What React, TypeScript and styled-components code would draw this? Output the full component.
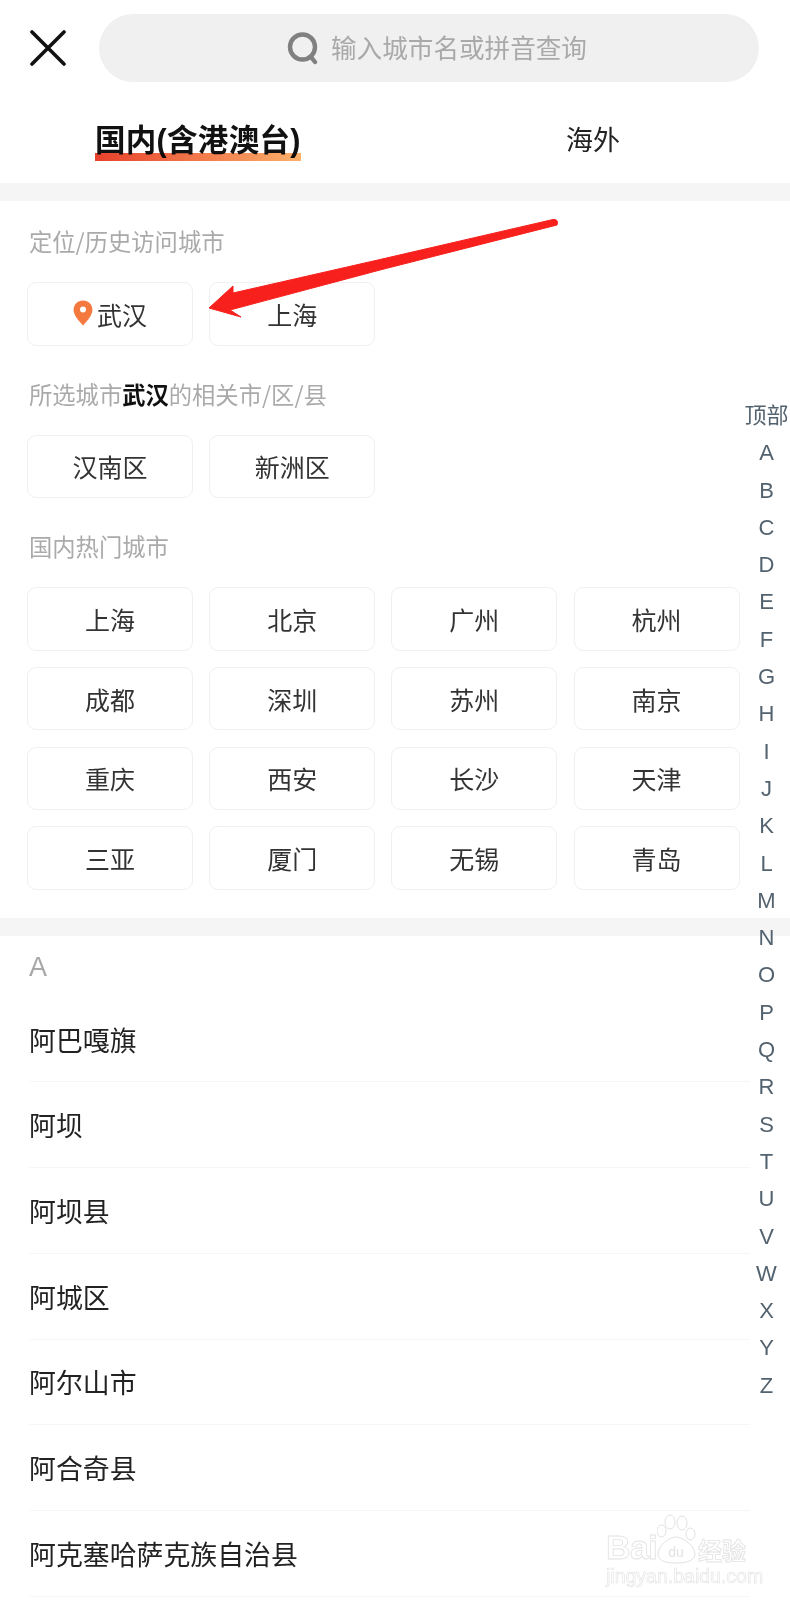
import styled, { createGlobalStyle } from "styled-components";

const GlobalStyle = createGlobalStyle`
  html, body {
    margin: 0;
    padding: 0;
    background: #fff;
  }
  #root {
    height: 1600px;
    overflow: hidden;
  }
  * {
    box-sizing: border-box;
  }
`;

const Page = styled.div`
  position: relative;
  width: 790px;
  height: 1600px;
  overflow: hidden;
  background: #fff;
  font-family: "Noto Sans CJK SC", "Noto Sans", sans-serif;
`;

const SearchRow = styled.div`
  display: flex;
  align-items: center;
  height: 96px;
  padding: 0 31px 0 30px;
  gap: 33px;
`;

const CloseBtn = styled.svg`
  width: 36px;
  height: 36px;
  flex: none;
`;

const SearchBox = styled.div`
  flex: 1;
  height: 68px;
  padding-left: 16px;
  background: #f0f0f0;
  border-radius: 34px;
  display: flex;
  align-items: center;
  justify-content: center;
  gap: 12px;
  font-size: 25.6px;
  color: #a9a9a9;
`;

const SearchHint = styled.span`
  padding-bottom: 4px;
`;

const Tabs = styled.div`
  display: flex;
  height: 87px;
  padding-left: 95px;
`;

const Tab = styled.div`
  position: relative;
  height: 65px;
  display: flex;
  align-items: center;
  margin-top: 12px;
  padding-bottom: 5px;
`;

const ActiveTab = styled(Tab)`
  width: 206px;
  font-family: "Liberation Sans", "Noto Sans CJK SC", sans-serif;
  font-size: 30.5px;
  font-weight: 700;
  color: #111;
  letter-spacing: 0.3px;
  white-space: nowrap;
  &::after {
    content: "";
    position: absolute;
    left: 0;
    right: 0;
    top: 45px;
    height: 8px;
    background: linear-gradient(90deg, #e8412c, #fbb06a);
    mix-blend-mode: multiply;
  }
`;

const PlainTab = styled(Tab)`
  margin-left: 265px;
  font-size: 27px;
  color: #222;
`;

const Band = styled.div`
  height: 18px;
  background: #f5f5f5;
`;

const HotSection = styled.section`
  padding: 0 50px 28px 27px;
`;

const SectionLabel = styled.div<{ $top: number }>`
  height: 60px;
  margin: ${(props) => props.$top}px 0 11px;
  padding-left: 2px;
  display: flex;
  align-items: center;
  font-size: 23.3px;
  color: #aaa;
  white-space: nowrap;
  b {
    color: #111;
    font-weight: 700;
  }
`;

const CityGrid = styled.div`
  display: grid;
  grid-template-columns: repeat(4, 166px);
  column-gap: 16.2px;
  row-gap: 16.25px;
`;

const CityBtn = styled.div`
  height: 63.5px;
  border: 1px solid #f0f0f0;
  border-radius: 9px;
  display: flex;
  align-items: center;
  justify-content: center;
  font-size: 25px;
  color: #333;
`;

const Pin = styled.svg`
  width: 20px;
  height: 26px;
  margin-right: 4px;
  margin-top: -1px;
`;

const LetterHead = styled.div`
  height: 61px;
  padding: 2px 0 0 29px;
  display: flex;
  align-items: center;
  font-family: "Liberation Sans", sans-serif;
  font-size: 27px;
  color: #a8a8a8;
`;

const CityList = styled.div`
  padding: 0 40px 0 29px;
`;

const CityRow = styled.div`
  height: 85.7px;
  display: flex;
  align-items: center;
  font-size: 26.9px;
  color: #222;
  border-bottom: 1px solid #f6f6f6;
`;

const IndexBar = styled.div`
  position: absolute;
  top: 397px;
  left: 743px;
  width: 47px;
  display: flex;
  flex-direction: column;
  align-items: center;
  color: #53626f;
  font-size: 22px;
`;

const IndexItem = styled.div`
  height: 37.3px;
  line-height: 37.3px;
  font-family: "Liberation Sans", "Noto Sans CJK SC", sans-serif;
`;

const ArrowMark = styled.svg`
  position: absolute;
  left: 0;
  top: 0;
  width: 790px;
  height: 400px;
  pointer-events: none;
`;

const Watermark = styled.div`
  position: absolute;
  left: 606px;
  top: 1514px;
  width: 150px;
  height: 70px;
  color: transparent;
  -webkit-text-stroke: 0.8px #e2e2e2;
`;

const MarkTop = styled.div`
  display: flex;
  align-items: flex-end;
  height: 50px;
`;

const MarkBai = styled.span`
  font-family: "Liberation Sans", sans-serif;
  font-size: 34px;
  font-weight: 700;
  line-height: 1;
  letter-spacing: -0.6px;
`;

const MarkPaw = styled.svg`
  width: 39px;
  height: 50px;
  flex: none;
`;

const MarkCn = styled.span`
  margin-left: 2px;
  font-size: 24px;
  font-weight: 700;
  line-height: 1;
  margin-bottom: 2px;
  white-space: nowrap;
`;

const MarkUrl = styled.div`
  font-family: "Liberation Sans", sans-serif;
  font-size: 19.5px;
  line-height: 20px;
  margin-top: 2px;
  white-space: nowrap;
  -webkit-text-stroke-width: 0.6px;
`;

const hotCities = [
  "上海", "北京", "广州", "杭州",
  "成都", "深圳", "苏州", "南京",
  "重庆", "西安", "长沙", "天津",
  "三亚", "厦门", "无锡", "青岛",
];

const nearby = ["汉南区", "新洲区"];

const aCities = [
  "阿巴嘎旗",
  "阿坝",
  "阿坝县",
  "阿城区",
  "阿尔山市",
  "阿合奇县",
  "阿克塞哈萨克族自治县",
];

const letters = "ABCDEFGHIJKLMNOPQRSTUVWXYZ".split("");

function App() {
  return (
    <Page>
      <GlobalStyle />
      <SearchRow>
        <CloseBtn viewBox="0 0 36 36">
          <path d="M2 2 L34 34 M34 2 L2 34" stroke="#111" strokeWidth="3.6" strokeLinecap="round" />
        </CloseBtn>
        <SearchBox>
          <svg width="32" height="33" viewBox="0 0 32 33">
            <circle cx="15.5" cy="15" r="12.5" fill="none" stroke="#808080" strokeWidth="4.4" />
            <path d="M24 25 L28 30" stroke="#808080" strokeWidth="4.4" strokeLinecap="round" />
          </svg>
          <SearchHint>输入城市名或拼音查询</SearchHint>
        </SearchBox>
      </SearchRow>

      <Tabs>
        <ActiveTab>国内(含港澳台)</ActiveTab>
        <PlainTab>海外</PlainTab>
      </Tabs>
      <Band />

      <HotSection>
        <SectionLabel $top={10}>定位/历史访问城市</SectionLabel>
        <CityGrid>
          <CityBtn>
            <Pin viewBox="0 0 20 26">
              <path
                d="M10 .5 C4.6 .5 .6 4.6 .6 9.8 C.6 15.5 6.2 21.5 10 25.5 C13.8 21.5 19.4 15.5 19.4 9.8 C19.4 4.6 15.4 .5 10 .5 Z"
                fill="#f5793f"
              />
              <circle cx="10" cy="9.5" r="3" fill="#fff" />
            </Pin>
            武汉
          </CityBtn>
          <CityBtn>上海</CityBtn>
        </CityGrid>

        <SectionLabel $top={18}>
          <span>所选城市<b>武汉</b>的相关市/区/县</span>
        </SectionLabel>
        <CityGrid>
          {nearby.map((name) => (
            <CityBtn key={name}>{name}</CityBtn>
          ))}
        </CityGrid>

        <SectionLabel $top={18}>国内热门城市</SectionLabel>
        <CityGrid>
          {hotCities.map((name) => (
            <CityBtn key={name}>{name}</CityBtn>
          ))}
        </CityGrid>
      </HotSection>
      <Band />

      <LetterHead>A</LetterHead>
      <CityList>
        {aCities.map((name) => (
          <CityRow key={name}>{name}</CityRow>
        ))}
      </CityList>

      <IndexBar>
        <IndexItem>顶部</IndexItem>
        {letters.map((l) => (
          <IndexItem key={l}>{l}</IndexItem>
        ))}
      </IndexBar>

      <ArrowMark viewBox="0 0 790 400">
        <path
          d="M209 308 L233 286 L233 293 L380 259.5 L553 219.5 Q559 219 557 225 L380 270 L230 310 L241 317 Z"
          fill="#f7201c"
          stroke="#f7201c"
          strokeWidth="1"
          strokeLinejoin="round"
        />
      </ArrowMark>

      <Watermark>
        <MarkTop>
          <MarkBai>Bai</MarkBai>
          <MarkPaw viewBox="0 0 39 50">
            <g fill="none" stroke="#e2e2e2" strokeWidth="1">
              <ellipse cx="4.5" cy="17" rx="4.5" ry="6" />
              <ellipse cx="13" cy="8" rx="5" ry="7" />
              <ellipse cx="25" cy="9" rx="5" ry="7" />
              <ellipse cx="33.5" cy="20" rx="4.5" ry="6" />
              <path d="M19 23 C12 23 1 32 1 40 C1 46 7 49 19 49 C31 49 38 46 38 40 C38 32 26 23 19 23 Z" />
            </g>
            <text x="19" y="43" textAnchor="middle" fontFamily="Liberation Sans" fontSize="14" fill="#e2e2e2" stroke="none">
              du
            </text>
          </MarkPaw>
          <MarkCn>经验</MarkCn>
        </MarkTop>
        <MarkUrl>jingyan.baidu.com</MarkUrl>
      </Watermark>
    </Page>
  );
}

export default App;
